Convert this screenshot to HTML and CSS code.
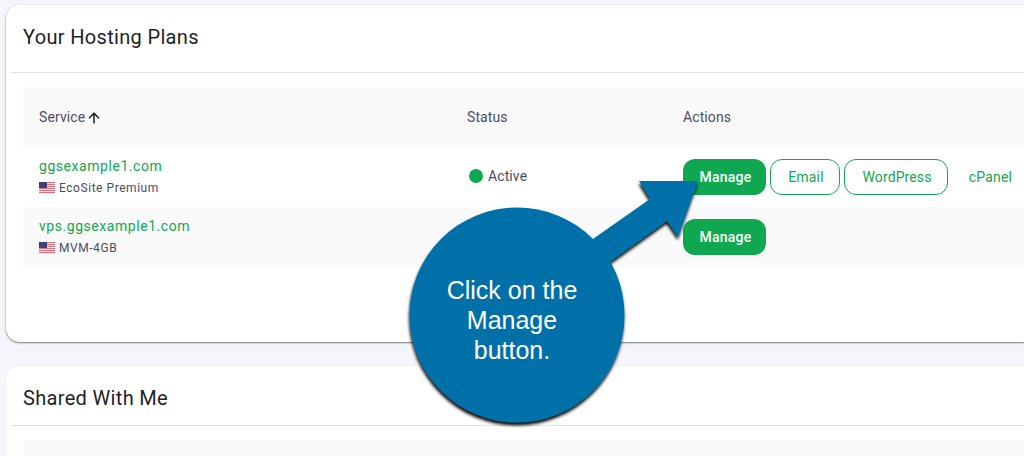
FILE: index.html
```html
<!DOCTYPE html>
<html lang="en">
<head>
<meta charset="utf-8">
<title>Your Hosting Plans</title>
<link rel="stylesheet" href="styles.css">
</head>
<body>
<main class="page">
  <section class="card card-plans">
    <h2 class="card-title">Your Hosting Plans</h2>
    <div class="table">
      <div class="row head">
        <div class="cell cell-service">Service
          <svg class="sort" viewBox="0 0 12 12" width="12" height="12"><path d="M6 11.5V1.5M1 6.3L6 1.3L11 6.3" fill="none" stroke="#1c1c24" stroke-width="1.5"/></svg>
        </div>
        <div class="cell cell-status">Status</div>
        <div class="cell">Actions</div>
      </div>
      <div class="row">
        <div class="cell cell-service">
          <div class="stack">
            <a class="domain">ggsexample1.com</a>
            <span class="plan">
              <svg class="flag" viewBox="0 0 16 12" width="16" height="12"><use href="#us"/></svg>
              EcoSite Premium
            </span>
          </div>
        </div>
        <div class="cell cell-status cell-active"><span class="dot"></span>Active</div>
        <div class="cell actions">
          <a class="btn solid">Manage</a>
          <a class="btn outline btn-email">Email</a>
          <a class="btn outline btn-wp">WordPress</a>
          <a class="btn ghost">cPanel</a>
        </div>
      </div>
      <div class="row alt">
        <div class="cell cell-service">
          <div class="stack">
            <a class="domain">vps.ggsexample1.com</a>
            <span class="plan">
              <svg class="flag" viewBox="0 0 16 12" width="16" height="12"><use href="#us"/></svg>
              MVM-4GB
            </span>
          </div>
        </div>
        <div class="cell cell-status"></div>
        <div class="cell actions"><a class="btn solid">Manage</a></div>
      </div>
    </div>
  </section>
  <section class="card card-shared">
    <h2 class="card-title">Shared With Me</h2>
    <div class="table"><div class="row head row-cut"></div></div>
  </section>
</main>

<svg class="defs" width="0" height="0" aria-hidden="true">
  <symbol id="us" viewBox="0 0 16 12">
    <rect width="16" height="12" fill="#f6e6e8"/>
    <path d="M0 .5H16M0 2.5H16M0 4.5H16M0 6.5H16M0 8.5H16M0 10.5H16" stroke="#d4737d" stroke-width="1"/>
    <rect width="8" height="6" fill="#3f4374"/>
  </symbol>
</svg>

<div class="callout">
  <svg class="callout-art" viewBox="0 0 1024 456" width="1024" height="456" aria-hidden="true">
    <defs>
      <filter id="shade" x="-20%" y="-20%" width="140%" height="140%">
        <feDropShadow dx="-0.5" dy="3" stdDeviation="1.6" flood-color="#000" flood-opacity=".95"/>
      </filter>
    </defs>
    <g filter="url(#shade)" fill="#0070a8">
      <circle cx="517" cy="315" r="107.5"/>
      <path d="M593 239L650 199L639 181L698 181L678 237L667 221L610 262Z"/>
    </g>
  </svg>
  <p class="callout-text">Click on the Manage button.</p>
</div>
</body>
</html>
```
FILE: styles.css
```css
* { box-sizing: border-box; }
html, body { margin: 0; height: 456px; overflow: hidden; }
body {
  background: #f5f6fb;
  font-family: Roboto, "Liberation Sans", sans-serif;
  position: relative;
  width: 1024px;
}
.page { padding: 5px 0 0 6px; display: flex; flex-direction: column; gap: 24px; width: 1024px; height: 456px; }
.card {
  background: #fff;
  border-radius: 14px 0 0 14px;
  padding: 0 0 0 5px;
  width: 1018px;
}
.card-plans { height: 337px; box-shadow: 0 1px 2px rgba(0,0,0,.5), 0 0 2px rgba(0,0,0,.06); }
.card-shared { height: 90px; border-radius: 14px 0 0 0; box-shadow: 0 0 2px rgba(0,0,0,.06); }
.card-title {
  margin: 0;
  padding: 0 12px;
  height: 68px;
  display: flex;
  align-items: center;
  font-size: 20px;
  font-weight: 400;
  letter-spacing: .33px;
  color: #1d1f27;
  border-bottom: 1px solid #e2e2e4;
}
.card-plans .card-title { padding-bottom: 4px; }
.card-shared .card-title { height: 60px; padding-top: 4px; }
.table { margin: 14px 0 0 12px; }
.row {
  display: grid;
  grid-template-columns: 428px 216px 1fr;
  height: 60px;
  align-items: center;
  padding-left: 16px;
}
.row-cut { height: 16px; }
.head, .alt { background: #fafafa; }
.cell { display: flex; align-items: center; font-size: 14px; letter-spacing: .1px; color: #4a4d63; }
.sort { margin-left: 3px; margin-top: 2px; }
.stack { display: flex; flex-direction: column; gap: 5px; }
.domain { font-size: 14px; letter-spacing: .55px; color: #12a650; line-height: 17px; }
.plan { display: flex; align-items: center; gap: 4px; font-size: 12px; letter-spacing: .55px; line-height: 16px; color: #4a4d63; }
.flag { display: block; }
.defs { position: absolute; }
.cell-status { margin-bottom: 1px; }
.cell-active { margin-bottom: 3px; }
.dot { width: 14px; height: 14px; border-radius: 50%; background: #0fa750; margin: 0 5px 0 2px; }
.actions { gap: 4px; }
.btn {
  display: flex;
  align-items: center;
  justify-content: center;
  height: 36px;
  border-radius: 12px;
  font-size: 14px;
  font-weight: 500;
  letter-spacing: .2px;
  color: #12a650;
}
.btn.solid { width: 83px; padding-left: 2px; background: #0fa750; color: #fff; }
.btn.outline { border: 1px solid #12a650; font-weight: 400; }
.btn-email { width: 70px; padding-left: 2px; }
.btn-wp { width: 104px; padding-left: 2px; letter-spacing: .1px; }
.btn.ghost { width: 77px; font-weight: 400; }
.callout { position: absolute; left: 0; top: 0; width: 1024px; height: 456px; pointer-events: none; }
.callout-art { display: block; }
.callout-text {
  position: absolute;
  left: 432px;
  top: 275px;
  width: 160px;
  margin: 0;
  text-align: center;
  font: 25px/30px "Liberation Sans", Arial, sans-serif;
  color: #fff;
}
```
